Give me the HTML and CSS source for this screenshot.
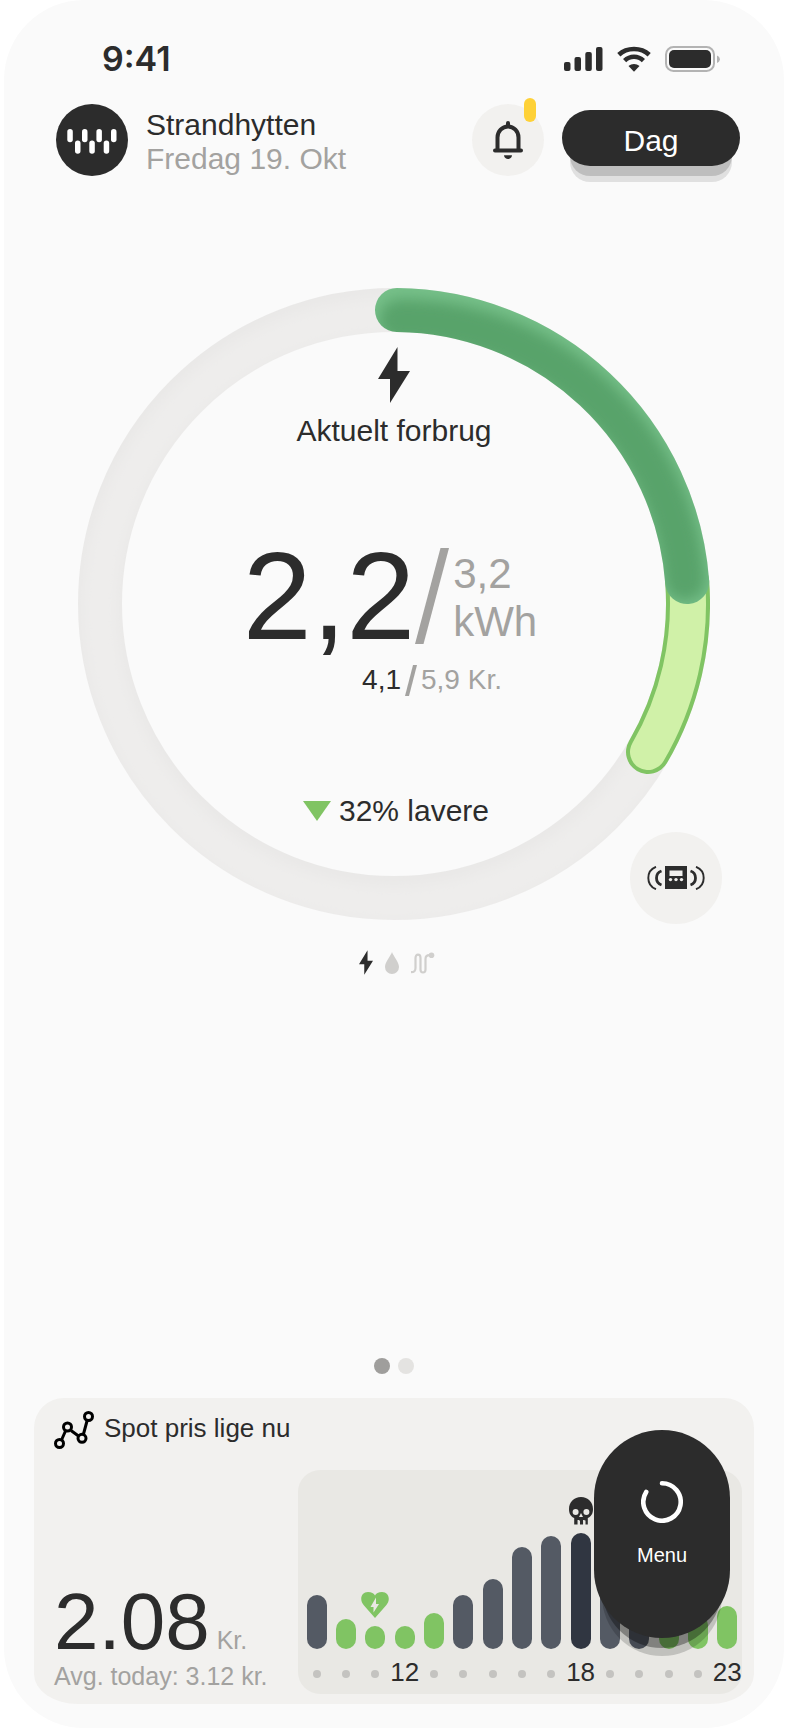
FILE: index.html
```html
<!DOCTYPE html>
<html lang="da">

<head>
    <meta charset="UTF-8">
    <meta name="viewport" content="width=device-width, initial-scale=1.0">
    <title>Strandhytten</title>
    <link rel="stylesheet" href="styles.css">
</head>

<body>

    <div class="phone">

        <div class="status-bar">
            <span class="time">9:41</span>
            <div class="status-icons">
                <svg width="39" height="26" viewBox="0 0 39 26" fill="#2c2c2c">
                    <rect x="0" y="16" width="6.500" height="9" rx="2" />
                    <rect x="10.500" y="11" width="6.500" height="14" rx="2" />
                    <rect x="21.300" y="6" width="6.500" height="19" rx="2" />
                    <rect x="32" y="1" width="6.500" height="24" rx="2" />
                </svg>
                <svg width="34" height="26" viewBox="0 0 34 26" fill="none" stroke="#2c2c2c" stroke-width="4.600">
                    <path d="M1.800 8.700C10 1 24 1 32.200 8.700" />
                    <path d="M7.600 14.700C13 9.500 21 9.500 26.400 14.700" />
                    <path d="M11.500 20C14.500 17.200 19.500 17.200 22.500 20L17 25.800Z" fill="#2c2c2c" stroke="none" />
                </svg>
                <svg width="55" height="26" viewBox="0 0 55 26">
                    <rect x="1" y="1" width="48" height="24" rx="7.500" fill="none" stroke="#b3b3b3" stroke-width="2" />
                    <rect x="4" y="4" width="42" height="18" rx="5" fill="#2c2c2c" />
                    <path d="M52 9.500C55.800 11 55.800 15.500 52 17Z" fill="#b3b3b3" />
                </svg>
            </div>
        </div>

        <header class="header">
            <svg class="logo" viewBox="0 0 72 72">
                <circle cx="36" cy="36" r="36" fill="#2c2c2c" />
                <g fill="#fff">
                    <rect x="11.300" y="25" width="5.500" height="13.300" rx="2.700" />
                    <rect x="26" y="25" width="5.500" height="13.300" rx="2.700" />
                    <rect x="40.400" y="25" width="5.500" height="13.300" rx="2.700" />
                    <rect x="55" y="25" width="5.500" height="13.300" rx="2.700" />
                    <rect x="19" y="36.400" width="5.500" height="13.300" rx="2.700" />
                    <rect x="33.300" y="36.400" width="5.500" height="13.300" rx="2.700" />
                    <rect x="47.700" y="36.400" width="5.500" height="13.300" rx="2.700" />
                </g>
            </svg>
            <div class="place">
                <h1>Strandhytten</h1>
                <p>Fredag 19. Okt</p>
            </div>
            <button class="bell" aria-label="Notifikationer">
                <svg width="30" height="38" viewBox="0 0 30 38" fill="none" stroke="#2c2c2c" stroke-width="4" stroke-linecap="round" stroke-linejoin="round">
                    <path d="M15 2V5" />
                    <path d="M2 29.500H28M4.500 28V16.500A10.500 11 0 0 1 25.500 16.500V28" />
                    <path d="M11 34.200H19C18.500 39.200 11.500 39.200 11 34.200Z" fill="#2c2c2c" stroke="none" />
                </svg>
                <span class="badge"></span>
            </button>
            <button class="day">Dag</button>
        </header>

        <main class="usage">
            <svg class="ring" viewBox="0 0 632 632">
                <defs>
                    <filter id="soft" x="-20%" y="-20%" width="140%" height="140%">
                        <feGaussianBlur stdDeviation="7" />
                    </filter>
                    <mask id="trackMask" maskUnits="userSpaceOnUse" x="0" y="0" width="632" height="632">
                        <circle cx="316" cy="316" r="294" fill="none" stroke="#fff" stroke-width="44" />
                    </mask>
                    <mask id="usedMask" maskUnits="userSpaceOnUse" x="0" y="0" width="632" height="632">
                        <path d="M319 22A294 294 0 0 1 609.200 294" fill="none" stroke="#fff" stroke-width="44" stroke-linecap="round" />
                    </mask>
                </defs>
                <!-- track -->
                <g mask="url(#trackMask)">
                    <rect width="632" height="632" fill="#e9e8e7" />
                    <circle cx="316" cy="322" r="294" fill="none" stroke="#eeedec" stroke-width="38" filter="url(#soft)" />
                </g>
                <!-- expected -->
                <path d="M609.200 294A294 294 0 0 1 570 464" fill="none" stroke="#80c463" stroke-width="44" stroke-linecap="round" />
                <path d="M609.200 294A294 294 0 0 1 570 464" fill="none" stroke="#d0f1a8" stroke-width="36" stroke-linecap="round" />
                <!-- used -->
                <g mask="url(#usedMask)">
                    <rect width="632" height="632" fill="#76c089" />
                    <path d="M322 32A286 286 0 0 1 607 292" fill="none" stroke="#58a36a" stroke-width="42" stroke-linecap="round" filter="url(#soft)" />
                </g>
            </svg>

            <div class="reading">
                <svg width="32" height="56" viewBox="0 0 32 56" fill="#2c2c2c">
                    <path d="M19.500 0V24H32L12 56V32H0Z" />
                </svg>
                <h2>Aktuelt forbrug</h2>
                <div class="amount">
                    <span class="now">2,2</span>
                    <svg width="34" height="96" viewBox="0 0 34 96" fill="#a3a2a0">
                        <path d="M25.500 0H34L8.500 96H0Z" />
                    </svg>
                    <span class="limit">3,2<br>kWh</span>
                </div>
                <p class="price">
                    <span>4,1</span>
                    <svg width="12" height="31" viewBox="0 0 12 31" fill="#a3a2a0">
                        <path d="M8 0H12L4 31H0Z" />
                    </svg>
                    <span class="muted">5,9 Kr.</span>
                </p>
                <p class="lower">
                    <svg width="28" height="20" viewBox="0 0 28 20" fill="#80c463">
                        <path d="M0 0H28L14 20Z" />
                    </svg>
                    32% lavere
                </p>
            </div>

            <button class="meter" aria-label="Måler">
                <svg width="60" height="24" viewBox="0 0 60 24">
                    <rect x="19" y="0" width="22" height="23" fill="#2c2c2c" />
                    <rect x="23.500" y="4.500" width="13" height="5.500" fill="#f2f1ef" />
                    <g fill="#f2f1ef">
                        <circle cx="24.500" cy="13.600" r="1.700" />
                        <circle cx="30" cy="13.600" r="1.700" />
                        <circle cx="35.500" cy="13.600" r="1.700" />
                    </g>
                    <g fill="none" stroke="#2c2c2c">
                        <path d="M15.500 5A7.400 7.400 0 0 0 15.500 19M44.500 5A7.400 7.400 0 0 1 44.500 19" stroke-width="2.800" />
                        <path d="M10 .8A12 12 0 0 0 10 23.200M50 .8A12 12 0 0 1 50 23.200" stroke-width="1.900" />
                    </g>
                </svg>
            </button>
        </main>

        <div class="kinds">
            <svg width="14" height="25" viewBox="0 0 32 56" fill="#2c2c2c">
                <path d="M19.500 0V24H32L12 56V32H0Z" />
            </svg>
            <svg width="14" height="22" viewBox="0 0 14 22" fill="#d0cfcd">
                <path d="M7 0C8 3.500 14 10 14 15A7 7 0 0 1 0 15C0 10 6 3.500 7 0Z" />
            </svg>
            <svg width="24" height="22" viewBox="0 0 24 22" fill="none" stroke="#d0cfcd" stroke-width="2.200">
                <path d="M0 20.200C3 20.200 4.500 19 4.500 16V6C4.500 1.500 9.500 1.500 9.500 6V17.500C9.500 21.500 14.500 21.500 14.500 17.500V7C14.500 4 16 3.200 18.500 3.200" />
                <circle cx="20.500" cy="3.200" r="2.800" fill="#d0cfcd" stroke="none" />
            </svg>
        </div>

        <div class="pages">
            <span class="page active"></span>
            <span class="page"></span>
        </div>

        <section class="spot">
            <div class="spot-head">
                <svg width="40" height="38" viewBox="0 0 40 38" fill="none" stroke="#000" stroke-width="3">
                    <path d="M7.500 29L11.500 20M17 19.500L24.500 25M29.500 23L33 10" />
                    <circle cx="5.500" cy="32.500" r="4" />
                    <circle cx="13.500" cy="16" r="4" />
                    <circle cx="28" cy="27.300" r="4" />
                    <circle cx="34.500" cy="5.500" r="4" />
                </svg>
                <h2>Spot pris lige nu</h2>
            </div>
            <div class="spot-body">
                <div class="spot-price">
                    <p class="current"><span class="big">2.08</span> Kr.</p>
                    <p>Avg. today: 3.12 kr.</p>
                </div>
                <div class="chart">
                    <div class="col"><div class="bar" style="height: 54px"></div><i></i></div>
                    <div class="col"><div class="bar low" style="height: 30px"></div><i></i></div>
                    <div class="col">
                        <svg width="28" height="26" viewBox="0 0 28 26">
                            <path d="M14 26L3 13.500C-2 8 0 0 7 0C10.500 0 13 1.500 14 3.500C15 1.500 17.500 0 21 0C28 0 30 8 25 13.500Z" fill="#80c463" />
                            <path d="M15 5.500V12H18L12.500 20.500V15H9.500Z" fill="#e9e8e4" />
                        </svg>
                        <div class="bar low" style="height: 23px"></div><i></i>
                    </div>
                    <div class="col"><div class="bar low" style="height: 23px"></div><b>12</b></div>
                    <div class="col"><div class="bar low" style="height: 36px"></div><i></i></div>
                    <div class="col"><div class="bar" style="height: 54px"></div><i></i></div>
                    <div class="col"><div class="bar" style="height: 70px"></div><i></i></div>
                    <div class="col"><div class="bar" style="height: 102px"></div><i></i></div>
                    <div class="col"><div class="bar" style="height: 113px"></div><i></i></div>
                    <div class="col">
                        <svg width="24" height="28" viewBox="0 0 24 28">
                            <path d="M12 0C19 0 24 5 24 12C24 17 22 19.500 18.800 21V27.500H16.500V23.500H14.800V27.500H11V23.500H9.300V27.500H5.200V21C2 19.500 0 17 0 12C0 5 5 0 12 0Z" fill="#2c2c2c" />
                            <g fill="#e9e8e4">
                                <circle cx="6.600" cy="15" r="3" />
                                <circle cx="17.400" cy="15" r="3" />
                                <path d="M12 16L14 20H10Z" />
                            </g>
                            <path d="M9.300 23V28M14.800 23V28" stroke="#e9e8e4" stroke-width="1.500" />
                        </svg>
                        <div class="bar peak" style="height: 116px"></div><b>18</b>
                    </div>
                    <div class="col"><div class="bar" style="height: 96px"></div><i></i></div>
                    <div class="col"><div class="bar" style="height: 60px"></div><i></i></div>
                    <div class="col"><div class="bar low" style="height: 24px"></div><i></i></div>
                    <div class="col"><div class="bar low" style="height: 34px"></div><i></i></div>
                    <div class="col"><div class="bar low" style="height: 43px"></div><b>23</b></div>
                </div>
            </div>
            <button class="menu">
                <svg width="42" height="42" viewBox="0 0 42 42" fill="none" stroke="#fff" stroke-width="4.600" stroke-linecap="round">
                    <path d="M21 2.300A18.700 18.700 0 1 1 5.200 11" />
                </svg>
                Menu
            </button>
        </section>

    </div>

</body>

</html>
```
FILE: styles.css
```css
* {
    margin: 0;
    padding: 0;
    box-sizing: border-box;
}

body {
    background: #fff;
    color: #2c2c2c;
    font-family: "Liberation Sans", Arial, sans-serif;
    font-size: 30px;
}

svg {
    display: block;
    flex-shrink: 0;
}

h1,
h2 {
    font-size: inherit;
    font-weight: normal;
}

button {
    border: none;
    font-family: inherit;
    cursor: pointer;
}

.phone {
    display: flex;
    flex-direction: column;
    min-height: 100vh;
    margin: 0 2px 0 4px;
    padding: 0 30px 24px;
    border-radius: 80px;
    background: #fafafa;
}

/* top */
.status-bar {
    display: flex;
    align-items: center;
    justify-content: space-between;
    padding: 39px 34px 0 68px;
}

.time {
    font-family: Inter, sans-serif;
    font-size: 34px;
    font-weight: 600;
    line-height: 40px;
}

.status-icons {
    display: flex;
    gap: 14px;
}

.header {
    display: flex;
    align-items: center;
    padding: 25px 14px 0 22px;
}

.logo {
    width: 72px;
    height: 72px;
}

.place {
    flex: 1;
    margin-left: 18px;
    padding-top: 4px;
    line-height: 34px;
}

.place p {
    color: #a3a2a0;
}

.bell {
    position: relative;
    display: flex;
    align-items: center;
    justify-content: center;
    width: 72px;
    height: 72px;
    border-radius: 50%;
    background: #f2f1ef;
}

.badge {
    position: absolute;
    top: -6px;
    right: 8px;
    width: 12px;
    height: 24px;
    border-radius: 6px;
    background: #fed137;
}

.day {
    width: 178px;
    height: 56px;
    margin: 0 0 4px 18px;
    padding-top: 6px;
    border-radius: 28px;
    background: #2c2c2c;
    box-shadow: 0 18px 0 -8px rgba(0, 0, 0, 0.15), 0 24px 0 -8px rgba(0, 0, 0, 0.1);
    color: #fff;
    font-size: 30px;
}

/* ring */
.usage {
    position: relative;
    align-self: center;
    width: 100%;
    max-width: 632px;
    margin-top: 112px;
}

.ring {
    width: 100%;
}

.reading {
    position: absolute;
    inset: 0;
    display: flex;
    flex-direction: column;
    align-items: center;
    padding-top: 59px;
}

.reading h2 {
    margin-top: 10px;
    line-height: 36px;
}

.amount {
    display: flex;
    align-items: center;
    margin-top: 97px;
}

.now {
    font-size: 124px;
    line-height: 96px;
}

.limit {
    padding: 4px 8px 0 4px;
    color: #a3a2a0;
    font-size: 42px;
    line-height: 48px;
}

.price {
    display: flex;
    align-items: center;
    gap: 4px;
    margin-top: 18px;
    padding-left: 76px;
    font-size: 28px;
    line-height: 32px;
}

.muted {
    color: #a3a2a0;
}

.lower {
    display: flex;
    align-items: center;
    gap: 8px;
    margin-top: 97px;
    padding-left: 4px;
    line-height: 36px;
}

.meter {
    position: absolute;
    right: -12px;
    bottom: -4px;
    display: flex;
    align-items: center;
    justify-content: center;
    width: 92px;
    height: 92px;
    border-radius: 50%;
    background: #f2f1ef;
}

.kinds {
    display: flex;
    align-items: center;
    justify-content: center;
    gap: 12px;
    margin-top: 30px;
    padding-left: 6px;
}

.pages {
    display: flex;
    justify-content: center;
    gap: 8px;
    margin-top: auto;
    padding-bottom: 24px;
}

.page {
    width: 16px;
    height: 16px;
    border-radius: 50%;
    background: #e4e3e1;
}

.page.active {
    background: #9f9e9c;
}

/* spot price card */
.spot {
    position: relative;
    padding: 12px 12px 10px 20px;
    border-radius: 30px 30px 44px 44px / 30px;
    background: #f2f1ef;
}

.spot-head {
    display: flex;
    align-items: center;
    gap: 10px;
    font-size: 26px;
    line-height: 40px;
}

.spot-head h2 {
    padding-bottom: 4px;
    line-height: 36px;
}

.spot-body {
    display: flex;
    align-items: flex-end;
    justify-content: space-between;
    margin-top: 20px;
}

.spot-price {
    padding-bottom: 4px;
    color: #a3a2a0;
    font-size: 25px;
    line-height: 28px;
    white-space: nowrap;
}

.big {
    color: #2c2c2c;
    font-size: 80px;
    line-height: 80px;
}

.chart {
    display: flex;
    align-items: flex-end;
    justify-content: space-between;
    flex: 0 1 444px;
    height: 224px;
    padding: 0 0 6px 4px;
    border-radius: 22px;
    background: #e9e8e4;
}

.col {
    display: flex;
    flex-direction: column;
    align-items: center;
    flex: 1 1 0;
    min-width: 0;
}

.col svg {
    margin-bottom: 8px;
}

.bar {
    width: 20px;
    border-radius: 10px;
    background: #545a64;
}

.bar.low {
    background: #80c463;
}

.bar.peak {
    background: #303641;
}

.col i {
    width: 8px;
    height: 8px;
    margin: 21px 0 10px;
    border-radius: 50%;
    background: #c4c3c0;
}

.col b {
    margin-top: 7px;
    font-size: 26px;
    font-weight: normal;
    line-height: 32px;
}

.menu {
    position: absolute;
    top: 32px;
    right: 24px;
    display: flex;
    flex-direction: column;
    align-items: center;
    gap: 21px;
    width: 136px;
    height: 208px;
    padding-top: 51px;
    border-radius: 68px;
    background: #2c2c2c;
    box-shadow: 0 18px 0 -8px rgba(0, 0, 0, 0.33), 0 26px 0 -8px rgba(0, 0, 0, 0.17);
    color: #fff;
    font-size: 20px;
}
```
